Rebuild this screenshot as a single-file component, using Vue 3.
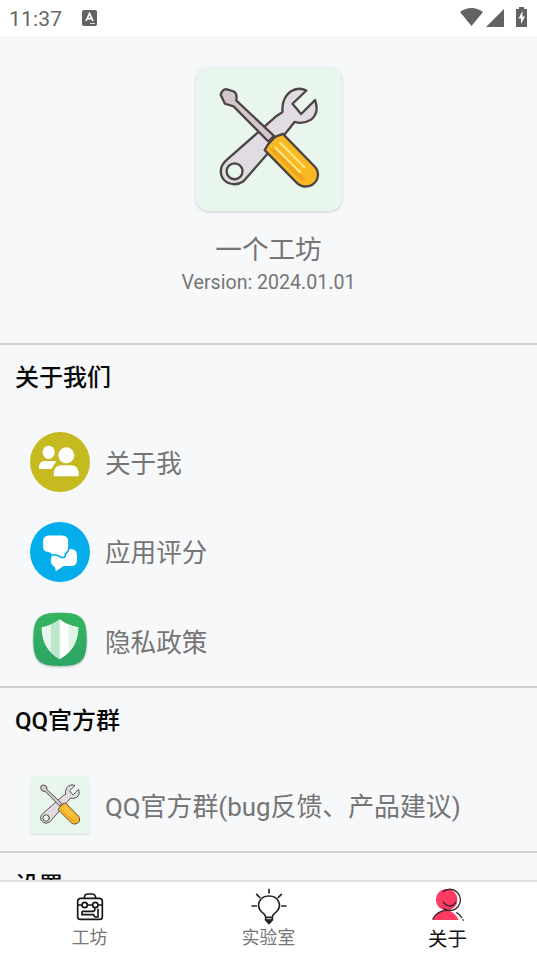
<script setup>
const aboutRows = [
  { id: 'me', label: '关于我' },
  { id: 'rate', label: '应用评分' },
  { id: 'privacy', label: '隐私政策' },
]
</script>

<template>
  <div class="screen">
    <svg class="defs" width="0" height="0">
      <symbol id="tools" viewBox="30 36 438 435">
        <g stroke="#4d4545" stroke-width="7" stroke-linejoin="round" stroke-linecap="round">
          <path fill="#e0dce2" d="M290 172Q286 132 314 110Q338 95 362 107L320 147L346 178L388 136Q402 174 376 195Q352 210 326 202L304 230L172 381Q149 397 123 385Q98 370 105 340Q108 328 123 315L272 184Z" />
          <circle cx="145" cy="351" r="24" fill="#e7f6ec" />
          <path fill="#d2c8cb" d="M103 120Q108 103 120 103L143 110Q154 117 150 137L264 244L247 261L142 155L116 147Z" />
          <path fill="#f9b923" d="M236 287L246 270L267 247L291 238L389 339Q402 356 394 376Q384 397 357 397Q342 396 330 383Z" />
        </g>
        <path d="M261 286L350 374" stroke="#efa51f" stroke-width="13" stroke-linecap="round" />
        <path d="M283 265L356 339M268 280L343 354" stroke="#ffe783" stroke-width="6" stroke-linecap="round" />
      </symbol>
    </svg>

    <header class="status">
      <span class="clock">11:37</span>
      <svg class="ime" viewBox="0 0 15 16"><rect width="15" height="16" rx="2" fill="#626262" /><path d="M4 11L7.5 3.5L11 11M5.2 8.6H9.8" fill="none" stroke="#fff" stroke-width="1.7" /><path d="M8 13.5H13" stroke="#ddd" /></svg>
      <svg class="signals" viewBox="0 0 68 22">
        <path d="M0 5Q11.500-3 23 5L11.500 19Z" fill="#626262" />
        <path d="M44 2V20H26Z" fill="#626262" />
        <path d="M59 0H64V2H67V20H56V2H59Z" fill="#626262" />
        <path d="M62.500 4L58.500 11.500H61V17L65 9.500H62.500Z" fill="#fff" />
      </svg>
    </header>

    <main class="content">
      <section class="hero">
        <div class="logo"><svg viewBox="0 0 146 145"><use href="#tools" width="146" height="145" /></svg></div>
        <h1>一个工坊</h1>
        <p>Version: 2024.01.01</p>
      </section>

      <section class="group about">
        <h2>关于我们</h2>
        <div v-for="row in aboutRows" :key="row.id" class="row">
          <svg v-if="row.id === 'me'" class="icon" viewBox="0 0 180 180">
            <circle cx="90" cy="90" r="90" fill="#c5bb20" />
            <g fill="#fff"><ellipse cx="56" cy="61" rx="18" ry="20" /><path d="M27 111Q25 88 44 87H79L64 111Z" /><circle cx="109" cy="70" r="24" /><path d="M71 133Q69 100 93 100H124Q149 101 146 133Z" /></g>
          </svg>
          <svg v-else-if="row.id === 'rate'" class="icon" viewBox="0 0 180 180">
            <circle cx="90" cy="90" r="90" fill="#04aeea" />
            <path fill="#fff" d="M119 81Q142 80 141 103V118Q139 132 124 132H101L82 145Q75 149 76 137L66 128Q60 117 65 102Z" />
            <path fill="#fff" stroke="#04aeea" stroke-width="5" d="M55 38H96Q117 39 117 57V76Q117 88 106 96V103Q101 109 92 105L80 99H65Q61 94 53 92Q36 90 37 73V54Q38 40 55 38Z" />
          </svg>
          <svg v-else class="icon shield" viewBox="0 0 180 180">
            <defs><linearGradient id="green" x2="0" y2="1"><stop stop-color="#37b45f" /><stop offset="1" stop-color="#2ba564" /></linearGradient></defs>
            <path fill="url(#green)" d="M90 5C152 5 170 18 170 85S152 165 90 165S10 152 10 85S28 5 90 5Z" />
            <path fill="#e8f7ed" d="M89 25Q67 43 35 49Q34 114 89 145Z" /><path fill="#bde7cd" d="M62 41L89 26V145Q72 136 62 121Z" />
            <path fill="#fff" d="M89 25Q112 43 145 49Q145 114 89 145Z" /><path fill="#dff3e6" d="M116 41Q130 47 145 49Q143 93 116 124Z" />
          </svg>
          <span>{{ row.label }}</span>
        </div>
      </section>

      <section class="group qq">
        <h2>QQ官方群</h2>
        <div class="row">
          <div class="icon mini"><svg viewBox="0 0 60 59"><use href="#tools" width="60" height="59" /></svg></div>
          <span>QQ官方群(bug反馈、产品建议)</span>
        </div>
      </section>

      <section class="group"><h2>设置</h2></section>
    </main>

    <nav class="tabs">
      <a class="tab">
        <svg viewBox="0 0 102 108" fill="none" stroke="#161616" stroke-width="5">
          <path d="M34 31Q34 18 44 18H58Q68 19 68 31M22 31H80Q88 32 88 40V86Q88 94 80 94H22Q14 94 14 86V40Q14 32 22 31ZM14 51H26M44 51H58M76 51H88" />
          <circle cx="35" cy="51" r="8" /><circle cx="67" cy="51" r="8" /><path d="M27 70H62Q66 68 66 60M27 70V80H61L66 87H75V62" />
        </svg>
        <span>工坊</span>
      </a>
      <a class="tab">
        <svg viewBox="0 0 102 108" fill="none" stroke="#252525" stroke-width="5" stroke-linecap="round">
          <path d="M51 4V15M14 19L23 28M88 19L79 28M0 54H13M89 54H102M41 88Q41 82 35 77C8 57 20 24 51 24S94 57 67 77Q61 82 61 88ZM41 89V96H61V89M45 100L51 106L57 100" />
          <path d="M43 97H59L51 106Z" fill="#252525" />
        </svg>
        <span>实验室</span>
      </a>
      <a class="tab active">
        <svg viewBox="0 0 102 108" fill="none" stroke="#3b2630" stroke-width="4">
          <circle cx="47" cy="38" r="32" fill="#ff3b62" stroke="none" />
          <path d="M4 99Q17 71 43 70Q69 71 83 99Z" fill="#ff3b62" stroke="none" />
          <path d="M35 15A32 32 0 1 1 38 65M36 44Q45 57 56 57Q68 57 75 44M5 97Q19 70 49 70H60M76 76Q86 81 93 93M95 97L98 101" />
        </svg>
        <span>关于</span>
      </a>
    </nav>
  </div>
</template>

<style>
body { margin: 0; overflow: hidden; }
</style>

<style scoped>
.screen { display: flex; flex-direction: column; width: 537px; height: 956px; overflow: hidden; background: #fff; font-family: Roboto, "Noto Sans CJK SC", sans-serif; color: #757575; }
.defs { display: none; }
.status { box-sizing: border-box; flex: 0 0 36px; display: flex; align-items: center; padding: 0 9px 0 9px; }
.clock { font-size: 21px; letter-spacing: .2px; line-height: 34px; color: #666; width: 73px; padding-top: 2px; }
.ime { width: 15px; height: 16px; }
.signals { width: 68px; height: 22px; margin-left: auto; }
.content { flex: 1 1 0; min-height: 0; overflow: hidden; background: #f7f8fa; }
.hero { box-sizing: border-box; height: 307px; padding-top: 31px; display: flex; flex-direction: column; align-items: center; }
.logo { width: 146px; height: 144px; border-radius: 13px; background: #e8f6ed; box-shadow: 0 1px 3px #c5cdd3; overflow: hidden; }
.logo svg, .mini svg { display: block; width: 100%; height: 100%; }
h1 { margin: 19px 0 0; font-size: 26.6px; line-height: 40px; font-weight: 400; }
p { margin: 0; font-size: 19.6px; line-height: 26px; }
.group { box-sizing: border-box; border-top: 2px solid #d0d1d3; }
.about { height: 343px; }
.qq { height: 165px; }
h2 { margin: 0; padding: 15px 15px 0; font-size: 24px; line-height: 36px; font-weight: 500; color: #080808; }
.row { display: flex; align-items: center; height: 60px; margin-bottom: 29.5px; padding-left: 30px; gap: 15px; font-size: 25.6px; line-height: 40px; white-space: nowrap; }
.row span { padding-top: 3px; }
h2 + .row { margin-top: 36px; }
.qq .row { font-size: 25.9px; }
.icon { display: block; flex: none; width: 60px; height: 60px; }
.shield { filter: drop-shadow(0 1px 1px #a5b5ad); }
.mini { height: 58px; border-radius: 5px; background: #e8f6ed; overflow: hidden; box-shadow: 0 1px 1px #d7e0df; }
.tabs { box-sizing: border-box; flex: 0 0 76px; min-height: 0; border-top: 2px solid #dedfe1; display: grid; grid-template-columns: repeat(3, 1fr); grid-template-rows: 74px; background: #fff; }
.tab { display: flex; flex-direction: column; align-items: center; padding-top: 6px; font-size: 17.8px; line-height: 28px; color: #757575; }
.tab svg { flex: none; width: 34px; height: 36px; overflow: visible; }
.active { padding-top: 5px; font-size: 19.5px; line-height: 34px; color: #111; }
</style>
